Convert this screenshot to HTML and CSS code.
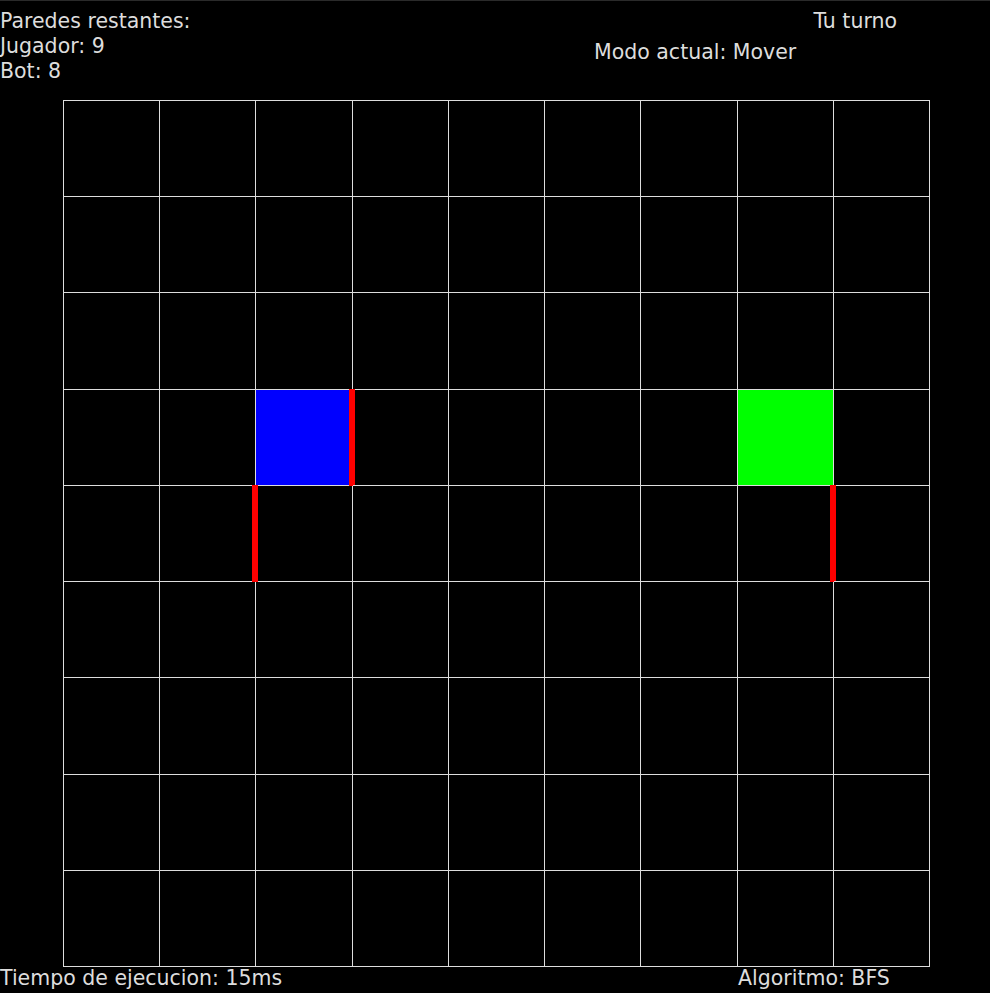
FILE: index.html
```html
<!DOCTYPE html>
<html lang="es">
<head>
  <meta charset="UTF-8">
  <title>Quoridor</title>
  <link rel="stylesheet" href="styles.css">
</head>
<body>
  <div class="screen">
    <div class="header">
      <div class="walls-left">
        <div>Paredes restantes:</div>
        <div>Jugador: 9</div>
        <div>Bot: 8</div>
      </div>
      <div class="status">
        <div class="turn">Tu turno</div>
        <div class="mode">Modo actual: Mover</div>
      </div>
    </div>

    <div class="board">
      <div class="cell"></div><div class="cell"></div><div class="cell"></div><div class="cell"></div><div class="cell"></div><div class="cell"></div><div class="cell"></div><div class="cell"></div><div class="cell"></div>
      <div class="cell"></div><div class="cell"></div><div class="cell"></div><div class="cell"></div><div class="cell"></div><div class="cell"></div><div class="cell"></div><div class="cell"></div><div class="cell"></div>
      <div class="cell"></div><div class="cell"></div><div class="cell"></div><div class="cell"></div><div class="cell"></div><div class="cell"></div><div class="cell"></div><div class="cell"></div><div class="cell"></div>
      <div class="cell"></div><div class="cell"></div><div class="cell player"><span class="wall wall-right"></span></div><div class="cell"></div><div class="cell"></div><div class="cell"></div><div class="cell"></div><div class="cell bot"></div><div class="cell"></div>
      <div class="cell"></div><div class="cell"></div><div class="cell"><span class="wall wall-left"></span></div><div class="cell"></div><div class="cell"></div><div class="cell"></div><div class="cell"></div><div class="cell"><span class="wall wall-right"></span></div><div class="cell"></div>
      <div class="cell"></div><div class="cell"></div><div class="cell"></div><div class="cell"></div><div class="cell"></div><div class="cell"></div><div class="cell"></div><div class="cell"></div><div class="cell"></div>
      <div class="cell"></div><div class="cell"></div><div class="cell"></div><div class="cell"></div><div class="cell"></div><div class="cell"></div><div class="cell"></div><div class="cell"></div><div class="cell"></div>
      <div class="cell"></div><div class="cell"></div><div class="cell"></div><div class="cell"></div><div class="cell"></div><div class="cell"></div><div class="cell"></div><div class="cell"></div><div class="cell"></div>
      <div class="cell"></div><div class="cell"></div><div class="cell"></div><div class="cell"></div><div class="cell"></div><div class="cell"></div><div class="cell"></div><div class="cell"></div><div class="cell"></div>
    </div>

    <div class="footer">
      <div>Tiempo de ejecucion: 15ms</div>
      <div>Algoritmo: BFS</div>
    </div>
  </div>
</body>
</html>
```

FILE: styles.css
```css
html, body {
  margin: 0;
  background-color: #000;
}
body {
  font-family: "DejaVu Sans", sans-serif;
  font-size: 20.5px;
  color: #ddd;
}
.screen {
  width: 990px;
  height: 993px;
  box-sizing: border-box;
  border-top: 1px solid #2a2a2a;
  overflow: hidden;
}
.header {
  height: 99px;
  display: flex;
  justify-content: space-between;
}
.walls-left {
  padding-top: 8px;
  line-height: 25px;
}
.status {
  width: 303px;
  margin-right: 93px;
  display: flex;
  flex-direction: column;
  line-height: 25px;
}
.turn {
  align-self: flex-end;
  padding-top: 8px;
}
.mode {
  margin-top: 6px;
}
.board {
  margin-left: 63px;
  width: 866px;
  height: 866px;
  border-top: 1px solid #ddd;
  border-left: 1px solid #ddd;
  display: grid;
  grid-template-columns: repeat(9, 1fr);
  grid-template-rows: repeat(9, 1fr);
}
.cell {
  position: relative;
  border-right: 1px solid #ddd;
  border-bottom: 1px solid #ddd;
}
.player {
  background-color: #0000ff;
}
.bot {
  background-color: #00ff00;
}
.wall {
  position: absolute;
  top: -1px;
  bottom: -1px;
  width: 6px;
  background-color: #ff0000;
}
.wall-right {
  right: -3px;
}
.wall-left {
  left: -4px;
}
.footer {
  display: grid;
  grid-template-columns: 738px auto;
  margin-top: -1px;
  line-height: 25px;
}
```
